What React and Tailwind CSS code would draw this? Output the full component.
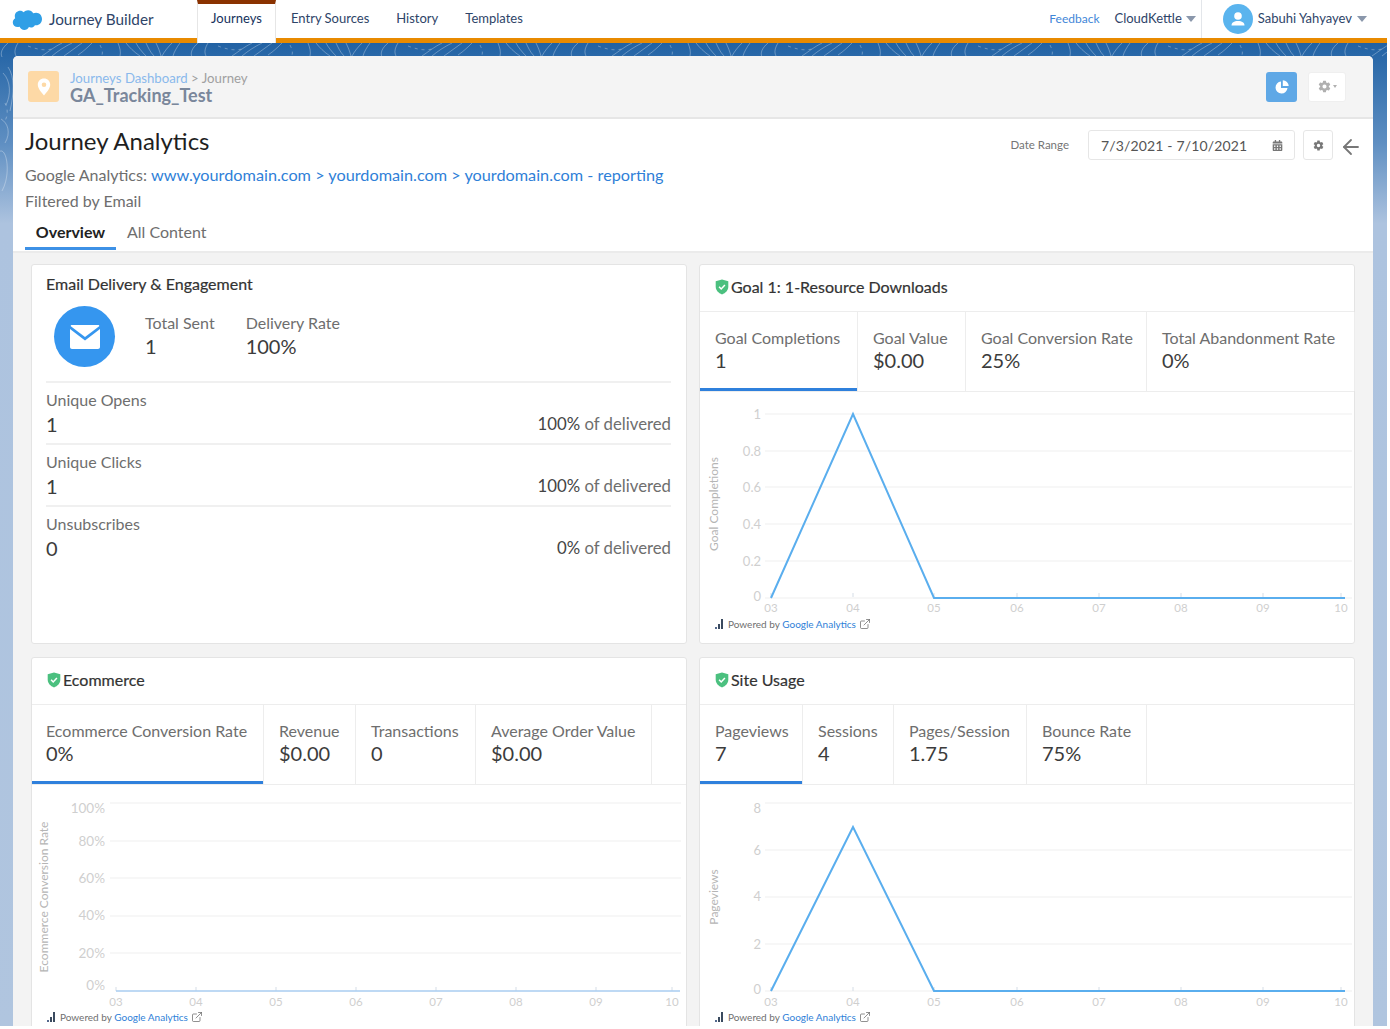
import React from "react";
import { IoSettingsSharp } from "react-icons/io5";
import { FaCalendarAlt } from "react-icons/fa";
import { ArrowLeft, ExternalLink } from "lucide-react";

const Cloud = () => (
  <svg width="31" height="21" viewBox="0 0 31 21" className="shrink-0">
    <path fill="#2f9fe6" d="M12.8 3.2C13.9 2 15.400 1.300 17.100 1.300c2.200 0 4.100 1.200 5.100 3 .9-.4 1.900-.6 2.900-.6 3.400 0 5.900 2.900 5.900 6.300s-2.500 6.300-5.900 6.300c-.4 0-.8 0-1.200-.1-.8 1.400-2.300 2.300-4 2.300-.7 0-1.400-.2-2-.5-.8 1.800-2.600 3-4.600 3-2.100 0-3.900-1.300-4.700-3.200-.3.100-.7.100-1.100.1C3.900 18.200 1.800 16 1.800 13.400c0-1.800 1-3.300 2.400-4.100-.3-.7-.4-1.400-.4-2.200C3.800 4.100 6.200 1.700 9.200 1.700c1.400 0 2.700.6 3.600 1.500z" />
  </svg>
);

const Shield = () => (
  <svg width="14" height="16" viewBox="0 0 14 16" className="shrink-0">
    <path fill="#4bc07f" d="M7 .5l6.300 1.800v5.500c0 3.500-2.700 6.300-6.300 7.700C3.400 14.100.7 11.300.7 7.800V2.300z" />
    <path d="M4.100 7.800l2.100 2.200 3.700-4" fill="none" stroke="#fff" strokeWidth="1.500" />
  </svg>
);

const Bars = () => (
  <svg width="9" height="10" viewBox="0 0 9 10" className="shrink-0">
    <rect x="0" y="8" width="2" height="2" fill="#54698d" />
    <rect x="3" y="5" width="2" height="5" fill="#3a4a5f" />
    <rect x="6" y="0" width="2" height="10" fill="#3a4a5f" />
  </svg>
);

const Caret = ({ className }) => (
  <span className={`inline-block w-0 h-0 border-l-[5px] border-r-[5px] border-t-[6px] border-l-transparent border-r-transparent border-t-[#8a97ab] ${className || ""}`} />
);

const Topo = () => (
  <svg className="absolute left-0 top-0 w-full h-[175px]" aria-hidden="true">
    <defs>
      <pattern id="topo" x="0" y="0" width="190" height="175" patternUnits="userSpaceOnUse">
        <g fill="none" stroke="#ffffff" strokeOpacity="0.3" strokeWidth="1">
          <path d="M8 0c-6 5-8 10-6 14M18 0c-3 5-4 9-2 13M62 0c-8 4-14 9-20 13M72 0c-8 4-14 8-20 13M82 0l-18 13M92 0c-4 4-8 8-14 12" />
          <path d="M118 0c2 5 3 9 2 13M126 0c3 4 8 9 14 13M136 0c2 4 6 9 10 13M146 0c2 4 4 9 8 13M156 0c2 4 4 9 5 13M172 0c-4 4-8 9-10 13M180 0c-3 4-6 9-7 13" />
          <path strokeDasharray="3 4" d="M28 3c8 3 16 5 24 3M100 2c2 4 3 7 2 10" />
          <path d="M3 30c8 8 8 22 3 32M8 24c7 10 6 26 2 44M1 76c7 4 10 14 4 24M-2 110c8-10 14 20 4 38" />
          <path strokeDasharray="3 4" d="M5 60c3 6 3 12 0 18" />
          <path d="M178 14c8 14 10 30 6 44M184 16c5 14 6 26 3 36M176 90c10 6 14 24 4 38M182 100c6 4 8 16 2 24M178 150c6-2 10 6 10 14" />
        </g>
      </pattern>
    </defs>
    <rect width="100%" height="100%" fill="url(#topo)" />
  </svg>
);

const Chart = ({ box, grid, yLabels, xLabels, axisY, title, titleX, titleY, labelX, labelSize = 13, points, line = "#5aaeee", lineW = 2 }) => (
  <svg viewBox={box} width="655" height="224" className="block" style={{ fontFamily: "Lato, sans-serif" }}>
    {grid.map((y) => (
      <line key={y} x1={grid.x1} x2={grid.x2} y1={y} y2={y} stroke="#f0f0f0" strokeWidth="1.200" />
    ))}
    {yLabels.map(([t, y]) => (
      <text key={t} x={labelX} y={y + 5} textAnchor="end" fontSize={labelSize} fill="#cfcfcf">{t}</text>
    ))}
    {xLabels.map(([t, x]) => (
      <g key={t}>
        <line x1={x} x2={x} y1={axisY - 4} y2={axisY} stroke="#d5dde6" />
        <text x={x} y={axisY + 15} textAnchor="middle" fontSize="11.500" fill="#cfcfcf">{t}</text>
      </g>
    ))}
    <text transform={`translate(${titleX} ${titleY}) rotate(-90)`} textAnchor="middle" fontSize="12" fill="#b5b5b5">{title}</text>
    <polyline points={points} fill="none" stroke={line} strokeWidth={lineW} />
  </svg>
);

const Powered = () => (
  <div className="flex items-center gap-[4px] h-[16px] pl-[15px] text-[10px] text-[#6f6f6f]">
    <Bars />
    <span>Powered by <span className="text-[#2f7fd8]">Google Analytics</span></span>
    <ExternalLink size={12} strokeWidth={1.300} className="text-[#555] -ml-[1px]" />
  </div>
);

const Metric = ({ w, label, value, active, tight }) => (
  <div className={`${w} ${tight ? "pl-[14px]" : "pl-[15px]"} relative shrink-0 h-full border-r border-[#ededed] pt-[16px]`}>
    <div className="text-[16px] leading-[19px] text-[#6e6e6e] whitespace-nowrap">{label}</div>
    <div className="text-[20px] leading-[26px] text-[#3c3c3c]">{value}</div>
    {active && <div className="absolute left-0 right-0 bottom-0 h-[3px] bg-[#2f80dc]" />}
  </div>
);

const MetricCard = ({ title, metrics, children, className }) => (
  <section className={`${className} bg-white border border-[#e4e4e4] rounded-[3px] w-[656px] shrink-0`}>
    <h2 className="h-[47px] flex items-center gap-[2px] pl-[15px] pb-[2px] border-b border-[#ededed] text-[16px] font-normal text-[#333]" style={{ WebkitTextStroke: "0.2px #333" }}>
      <Shield />
      {title}
    </h2>
    <div className="h-[80px] flex border-b border-[#ededed]">{metrics}</div>
    {children}
  </section>
);

const EmailRow = ({ label, value, pct }) => (
  <div className="h-[62px] border-t-2 border-[#f0f0f0] pt-[7px]">
    <div className="text-[16px] leading-[20px] text-[#6e6e6e]">{label}</div>
    <div className="flex justify-between items-center">
      <span className="text-[20px] leading-[26px] text-[#3c3c3c]">{value}</span>
      <span className="text-[16.750px] leading-[26px] pt-[1px] text-[#6e6e6e]"><span className="text-[#444]">{pct}</span> of delivered</span>
    </div>
  </div>
);

const days = ["03", "04", "05", "06", "07", "08", "09", "10"];
const rightX = [771, 853, 934, 1017, 1099, 1181, 1263, 1341];
const leftX = [116, 196, 276, 356, 436, 516, 596, 672];
const zip = (xs) => days.map((d, i) => [d, xs[i]]);

const g1 = Object.assign([414, 451, 487, 524, 561, 598], { x1: 765, x2: 1352 });
const g2 = Object.assign([803, 841, 878, 916, 953], { x1: 110, x2: 681 });
const g3 = Object.assign([803, 850, 897, 944, 991], { x1: 765, x2: 1352 });

export default function App() {
  return (
    <div className="w-full h-screen overflow-hidden bg-white" style={{ fontFamily: "Lato, 'Open Sans', sans-serif" }}>
      <div className="w-[1387px] h-[1026px] overflow-hidden flex flex-col">
        <header className="h-[43px] shrink-0 bg-white border-b-[5px] border-[#e88a00] flex items-stretch relative">
          <div className="flex items-center w-[197px] pl-[11px] gap-[7px] text-[15.300px] text-[#2e4468]">
            <Cloud />
            <span>Journey Builder</span>
          </div>
          <div className="relative h-[43px] w-[79px] bg-white border-x border-[#e6e6e6] border-t-[4px] border-t-[#8a3200] flex items-center justify-center text-[13px] text-[#16325c] pb-[9px]">
            Journeys
          </div>
          <nav className="flex items-center text-[13px] text-[#2e4468] pl-[15px] gap-[27px]">
            <span>Entry Sources</span>
            <span>History</span>
            <span>Templates</span>
          </nav>
          <div className="ml-auto flex items-center text-[13px] text-[#2e4468]">
            <span className="text-[12px] text-[#3f86d8] mr-[15px]">Feedback</span>
            <span>CloudKettle</span>
            <Caret className="ml-[4px] mr-[4px]" />
            <div className="h-full w-px bg-[#e3e6ea] ml-[1px] mr-[21px]" />
            <div className="w-[30px] h-[30px] rounded-full bg-[#5ab4ee] flex items-center justify-center mr-[5px]">
              <svg width="18" height="18" viewBox="0 0 18 18">
                <circle cx="9" cy="6" r="3.800" fill="#fff" />
                <path d="M2.500 15.500c0-3 2.500-4.500 6.500-4.500s6.500 1.500 6.500 4.500z" fill="#fff" />
              </svg>
            </div>
            <span>Sabuhi Yahyayev</span>
            <Caret className="ml-[5px] mr-[20px]" />
          </div>
        </header>

        <main className="relative flex-1 bg-[linear-gradient(180deg,#2162a4_0%,#5f8fc2_10%,#adc3df_18%,#b0c5df_100%)] px-[13px] pt-[13px]">
          <Topo />
          <div className="relative w-[1360px] h-[990px] rounded-t-[5px] overflow-hidden bg-[#f3f3f3]">
            <div className="h-[63px] bg-[#f4f4f4] border-b-2 border-[#e6e6e6] flex items-center pl-[15px] pr-[27px]">
              <div className="w-[31px] h-[31px] rounded-[3px] bg-[#fdd9a6] flex items-center justify-center">
                <svg width="14" height="18" viewBox="0 0 14 18">
                  <path fillRule="evenodd" fill="#fff" d="M7 0.500C3.400.5.800 3.200.8 6.700c0 3.800 3.700 7.700 6.200 10.800 2.500-3.100 6.200-7 6.200-10.800C13.200 3.200 10.600.5 7 .5zm0 4a2.300 2.300 0 110 4.600 2.300 2.300 0 010-4.600z" />
                </svg>
              </div>
              <div className="ml-[11px] pt-[1px]">
                <div className="text-[13.200px] leading-[15px] text-[#a0a0a0]">
                  <span className="text-[#8ab9ec]">Journeys Dashboard</span> &gt; Journey
                </div>
                <div className="text-[18px] leading-[18px] font-bold text-[#7a879b]">GA_Tracking_Test</div>
              </div>
              <div className="ml-auto flex items-center gap-[11px]">
                <div className="w-[31px] h-[30px] rounded-[3px] bg-[#5fa8e6] flex items-center justify-center">
                  <svg width="16" height="16" viewBox="0 0 16 16">
                    <path fill="#fff" d="M7 2.500a6 6 0 106.500 6.500H7z" />
                    <path fill="#fff" d="M8.800 1.200v5.900h5.900a5.900 5.900 0 00-5.900-5.900z" />
                  </svg>
                </div>
                <div className="w-[38px] h-[30px] rounded-[3px] bg-white border border-[#efefef] flex items-center justify-center gap-[2px]">
                  <IoSettingsSharp size={13} className="text-[#b0b0b0]" />
                  <span className="w-0 h-0 border-l-[2.500px] border-r-[2.500px] border-t-[3px] border-l-transparent border-r-transparent border-t-[#b0b0b0]" />
                </div>
              </div>
            </div>

            <div className="h-[134px] bg-white border-b-2 border-[#ebebeb]">
              <div className="flex justify-between">
                <h1 className="pl-[12px] pt-[6px] text-[24px] leading-[32px] font-normal text-[#1f1f1f]">Journey Analytics</h1>
                <div className="flex items-center h-[30px] mt-[11px] pr-[10px]">
                  <span className="text-[11.500px] text-[#757575] mr-[19px]">Date Range</span>
                  <div className="w-[207px] h-[30px] border border-[#e6e6e6] rounded-[3px] flex items-center justify-between pl-[12px] pr-[11px] text-[14px] text-[#555] tracking-[0.15px]">
                    <span>7/3/2021 - 7/10/2021</span>
                    <FaCalendarAlt size={11} className="text-[#777]" />
                  </div>
                  <div className="w-[30px] h-[30px] ml-[8px] border border-[#e6e6e6] rounded-[3px] flex items-center justify-center">
                    <IoSettingsSharp size={11} className="text-[#777]" />
                  </div>
                  <ArrowLeft size={24} strokeWidth={1.800} className="text-[#777] ml-[6px] mt-[3px]" />
                </div>
              </div>
              <div className="pl-[12px] mt-[5px] text-[16px] leading-[20px] text-[#6e6e6e]">
                Google Analytics: <span className="text-[16.250px] text-[#2f7fd8]">www.yourdomain.com &gt; yourdomain.com &gt; yourdomain.com - reporting</span>
              </div>
              <div className="pl-[12px] mt-[6px] text-[16px] leading-[20px] text-[#6e6e6e]">Filtered by Email</div>
              <div className="flex pl-[12px] mt-[11px] text-[16px] leading-[20px]">
                <div className="w-[91px] text-center font-bold text-[#222] h-[28px] border-b-[3px] border-[#3d91e6]">Overview</div>
                <div className="ml-[11px] text-[#6e6e6e]">All Content</div>
              </div>
            </div>

            <div className="flex flex-wrap gap-x-[12px] gap-y-[13px] pl-[18px] pt-[11px]">
              <section className="w-[656px] h-[380px] bg-white border border-[#e4e4e4] rounded-[3px] pl-[14px] pr-[15px]">
                <h2 className="pt-[9px] text-[16px] leading-[20px] font-normal text-[#333]" style={{ WebkitTextStroke: "0.2px #333" }}>Email Delivery &amp; Engagement</h2>
                <div className="flex h-[87px]">
                  <div className="w-[61px] h-[61px] ml-[8px] mt-[12px] rounded-full bg-[#3596ef] flex items-center justify-center">
                    <svg width="30" height="24" viewBox="0 0 30 24">
                      <path fill="#fff" d="M2 0h26c1 0 1.500.5 1.200 1.200L15 12 .8 1.200C.5.5 1 0 2 0z" />
                      <path fill="#fff" d="M0 4l15 11.500L30 4v18c0 1.100-.9 2-2 2H2c-1.100 0-2-.9-2-2z" />
                    </svg>
                  </div>
                  <div className="ml-[30px] pt-[19px]">
                    <div className="text-[16px] leading-[20px] text-[#6e6e6e]">Total Sent</div>
                    <div className="text-[20px] leading-[26px] text-[#3c3c3c]">1</div>
                  </div>
                  <div className="ml-[31px] pt-[19px]">
                    <div className="text-[16px] leading-[20px] text-[#6e6e6e]">Delivery Rate</div>
                    <div className="text-[20px] leading-[26px] text-[#3c3c3c]">100%</div>
                  </div>
                </div>
                <EmailRow label="Unique Opens" value="1" pct="100%" />
                <EmailRow label="Unique Clicks" value="1" pct="100%" />
                <EmailRow label="Unsubscribes" value="0" pct="0%" />
              </section>

              <MetricCard
                className="h-[380px]"
                title="Goal 1: 1-Resource Downloads"
                metrics={
                  <>
                    <Metric w="w-[158px]" label="Goal Completions" value="1" active />
                    <Metric w="w-[108px]" label="Goal Value" value="$0.00" />
                    <Metric w="w-[181px]" label="Goal Conversion Rate" value="25%" />
                    <Metric w="w-[208px]" label="Total Abandonment Rate" value="0%" />
                  </>
                }
              >
                <Chart
                  box="700 392 655 224"
                  grid={g1}
                  yLabels={[["1", 414], ["0.8", 451], ["0.6", 487], ["0.4", 524], ["0.2", 561], ["0", 596]]}
                  xLabels={zip(rightX)}
                  axisY={597}
                  title="Goal Completions"
                  titleX={718}
                  titleY={504}
                  labelX={761}
                  points="771,598 853,414 934,598 1345,598"
                />
                <Powered />
              </MetricCard>

              <MetricCard
                className="h-[400px]"
                title="Ecommerce"
                metrics={
                  <>
                    <Metric w="w-[232px]" label="Ecommerce Conversion Rate" value="0%" active tight />
                    <Metric w="w-[92px]" label="Revenue" value="$0.00" />
                    <Metric w="w-[120px]" label="Transactions" value="0" />
                    <Metric w="w-[176px]" label="Average Order Value" value="$0.00" />
                  </>
                }
              >
                <Chart
                  box="32 785 655 224"
                  grid={g2}
                  yLabels={[["100%", 808], ["80%", 841], ["60%", 878], ["40%", 915], ["20%", 953], ["0%", 985]]}
                  xLabels={zip(leftX)}
                  axisY={991}
                  title="Ecommerce Conversion Rate"
                  titleX={48}
                  titleY={897}
                  labelX={105}
                  labelSize={13.5}
                  points="116,991 680,991"
                  line="#a8cdf0"
                  lineW={1.5}
                />
                <Powered />
              </MetricCard>

              <MetricCard
                className="h-[400px]"
                title="Site Usage"
                metrics={
                  <>
                    <Metric w="w-[103px]" label="Pageviews" value="7" active />
                    <Metric w="w-[91px]" label="Sessions" value="4" />
                    <Metric w="w-[133px]" label="Pages/Session" value="1.75" />
                    <Metric w="w-[120px]" label="Bounce Rate" value="75%" />
                  </>
                }
              >
                <Chart
                  box="700 785 655 224"
                  grid={g3}
                  yLabels={[["8", 808], ["6", 850], ["4", 896], ["2", 944], ["0", 989]]}
                  xLabels={zip(rightX)}
                  axisY={991}
                  title="Pageviews"
                  titleX={718}
                  titleY={897}
                  labelX={761}
                  points="771,991 853,827 934,991 1345,991"
                />
                <Powered />
              </MetricCard>
            </div>
          </div>
        </main>
      </div>
    </div>
  );
}
